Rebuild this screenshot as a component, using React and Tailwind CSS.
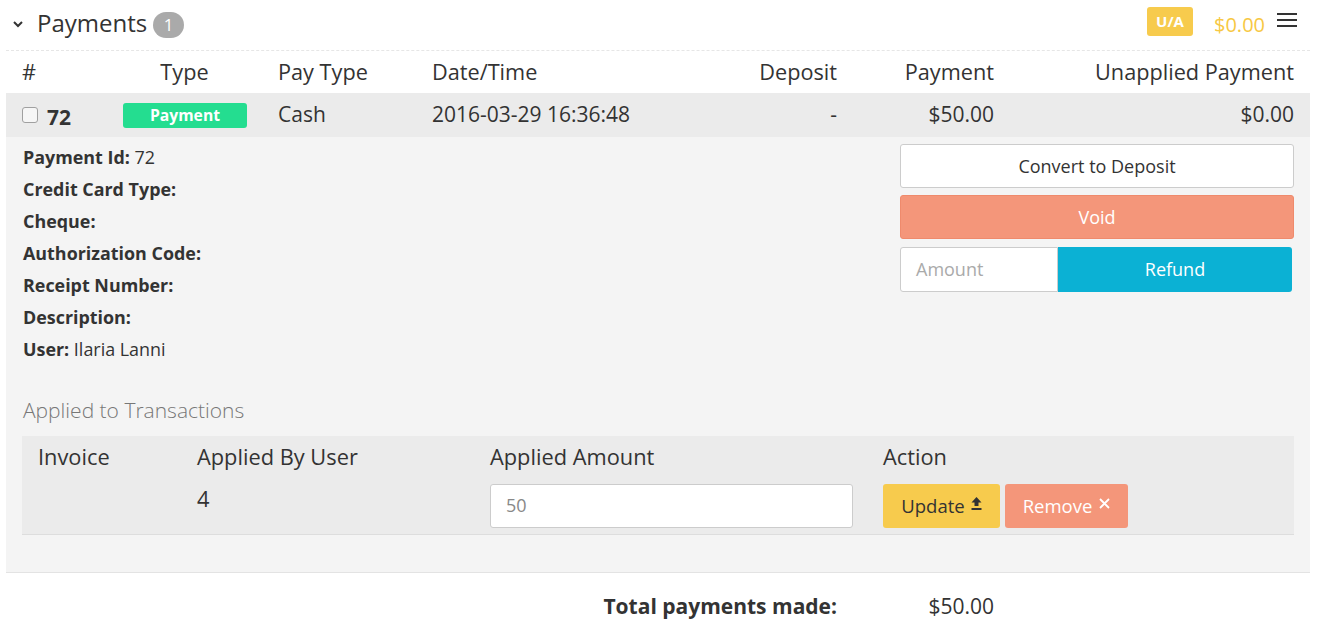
export default function App() {
  const cols = "grid grid-cols-[101px_155px_154px_260px_177px_157px_300px]";
  return (
    <div className="w-[1323px] h-[643px] overflow-hidden bg-white text-[#333] font-['Open_Sans',sans-serif] pl-[6px] pr-[13px]">
      {/* Header */}
      <div className="flex h-[51px] items-center border-b border-dashed border-[#e6e6e6] pb-[4px]">
        <svg width="12" height="8" viewBox="0 0 12 8" className="ml-[6px] mt-[2px]">
          <path d="M2 2 L6 6 L10 2" fill="none" stroke="#333" strokeWidth="2" />
        </svg>
        <span className="ml-[13px] text-[24px] leading-none">Payments</span>
        <span className="ml-[6px] mt-[3px] w-[31px] h-[26px] rounded-full bg-[#aaaaaa] text-white text-[17px] leading-[26px] text-center">1</span>
        <div className="ml-auto mr-[13px] flex items-center">
          <span className="w-[46px] h-[29px] rounded-[3px] bg-[#f7cb4d] text-white text-[15px] font-bold leading-[29px] text-center -mt-[4px]">U/A</span>
          <span className="ml-[21px] mt-[3px] text-[20px] text-[#f7c843]">$0.00</span>
          <svg width="20" height="16" viewBox="0 0 20 16" className="ml-[12px] -mt-[6px]">
            <rect x="0" y="1" width="20" height="2" fill="#333" />
            <rect x="0" y="7" width="20" height="2" fill="#333" />
            <rect x="0" y="13" width="20" height="2" fill="#333" />
          </svg>
        </div>
      </div>

      {/* Table header */}
      <div className={`${cols} h-[42px] items-center text-[21.7px]`}>
        <div className="pl-4">#</div>
        <div className="text-center">Type</div>
        <div className="pl-4">Pay Type</div>
        <div className="pl-4">Date/Time</div>
        <div className="text-right pr-4">Deposit</div>
        <div className="text-right pr-4">Payment</div>
        <div className="text-right pr-4">Unapplied Payment</div>
      </div>

      {/* Data row */}
      <div className={`${cols} h-[44px] items-center text-[21px] bg-[#ebebeb]`}>
        <div className="pl-4 flex items-center">
          <span className="w-[16px] h-[16px] rounded-[3px] border border-[#a0a0a0] bg-[#f6f6f6]"></span>
          <span className="ml-[9px] font-bold mt-[5px]">72</span>
        </div>
        <div className="pl-4">
          <div className="w-[124px] h-[25px] rounded-[3px] bg-[#24dd90] text-white text-[15.7px] font-bold leading-[25px] text-center">Payment</div>
        </div>
        <div className="pl-4">Cash</div>
        <div className="pl-4">2016-03-29 16:36:48</div>
        <div className="text-right pr-4">-</div>
        <div className="text-right pr-4">$50.00</div>
        <div className="text-right pr-4">$0.00</div>
      </div>

      {/* Detail panel */}
      <div className="bg-[#f4f4f4] border-b border-[#e3e3e3] px-4 pb-[37px]">
        <div className="flex justify-between">
          <div className="pt-[4px] pl-[1px] text-[17.9px] leading-[32px]">
            <div><b>Payment Id:</b> 72</div>
            <div><b>Credit Card Type:</b></div>
            <div><b>Cheque:</b></div>
            <div><b>Authorization Code:</b></div>
            <div><b>Receipt Number:</b></div>
            <div><b>Description:</b></div>
            <div><b>User:</b> Ilaria Lanni</div>
          </div>
          <div className="w-[394px] pt-[7px] flex flex-col text-[18px]">
            <button className="h-[44px] bg-white border border-[#cccccc] rounded-[3px] text-[#333]">Convert to Deposit</button>
            <button className="mt-[7px] h-[44px] bg-[#f4967a] border border-[#ef8a6c] rounded-[3px] text-white">Void</button>
            <div className="mt-[8px] flex h-[45px]">
              <div className="w-[158px] bg-white border border-[#cccccc] rounded-l-[3px] flex items-center pl-[15px] text-[#aaaaaa]">Amount</div>
              <button className="w-[234px] bg-[#0bb1d4] rounded-r-[3px] text-white">Refund</button>
            </div>
          </div>
        </div>

        <div className="mt-[30px] pl-[1px] text-[21px] font-light text-[#777]">Applied to Transactions</div>

        <div className="mt-[9px] bg-[#ebebeb] border-b border-[#dddddd] text-[21.8px]">
          <div className="grid grid-cols-[159px_293px_393px_1fr] h-[43px] items-center">
            <div className="pl-4">Invoice</div>
            <div className="pl-4">Applied By User</div>
            <div className="pl-4">Applied Amount</div>
            <div className="pl-4">Action</div>
          </div>
          <div className="grid grid-cols-[159px_293px_393px_1fr] h-[55px] items-start">
            <div className="pl-4"></div>
            <div className="pl-4 pt-[4px]">4</div>
            <div className="pl-4 pr-[14px] pt-[5px]">
              <div className="h-[44px] bg-white border border-[#cccccc] rounded-[3px] flex items-center pl-[15px] text-[18px] text-[#888]">50</div>
            </div>
            <div className="pl-4 pt-[5px] flex gap-[5px] text-[18.5px]">
              <button className="w-[117px] h-[44px] bg-[#f7cb4d] rounded-[3px] text-[#333] flex items-center justify-center gap-[6px]">
                Update
                <svg width="11" height="13" viewBox="0 0 11 13" className="-mt-[5px]">
                  <path d="M5.5 0 L10.5 5.5 L7.5 5.5 L7.5 9 L3.5 9 L3.5 5.5 L0.5 5.5 Z" fill="#333" />
                  <rect x="0.5" y="11" width="10" height="2" fill="#333" />
                </svg>
              </button>
              <button className="w-[123px] h-[44px] bg-[#f4967a] rounded-[3px] text-white flex items-center justify-center gap-[7px]">
                Remove
                <svg width="11" height="11" viewBox="0 0 11 11" className="-mt-[5px]">
                  <path d="M1 1 L10 10 M10 1 L1 10" stroke="#fff" strokeWidth="1.8" />
                </svg>
              </button>
            </div>
          </div>
        </div>
      </div>

      {/* Total */}
      <div className={`${cols} h-[68px] items-center text-[21px]`}>
        <div className="col-span-5 text-right pr-4 font-bold">Total payments made:</div>
        <div className="text-right pr-4">$50.00</div>
        <div></div>
      </div>
    </div>
  );
}
